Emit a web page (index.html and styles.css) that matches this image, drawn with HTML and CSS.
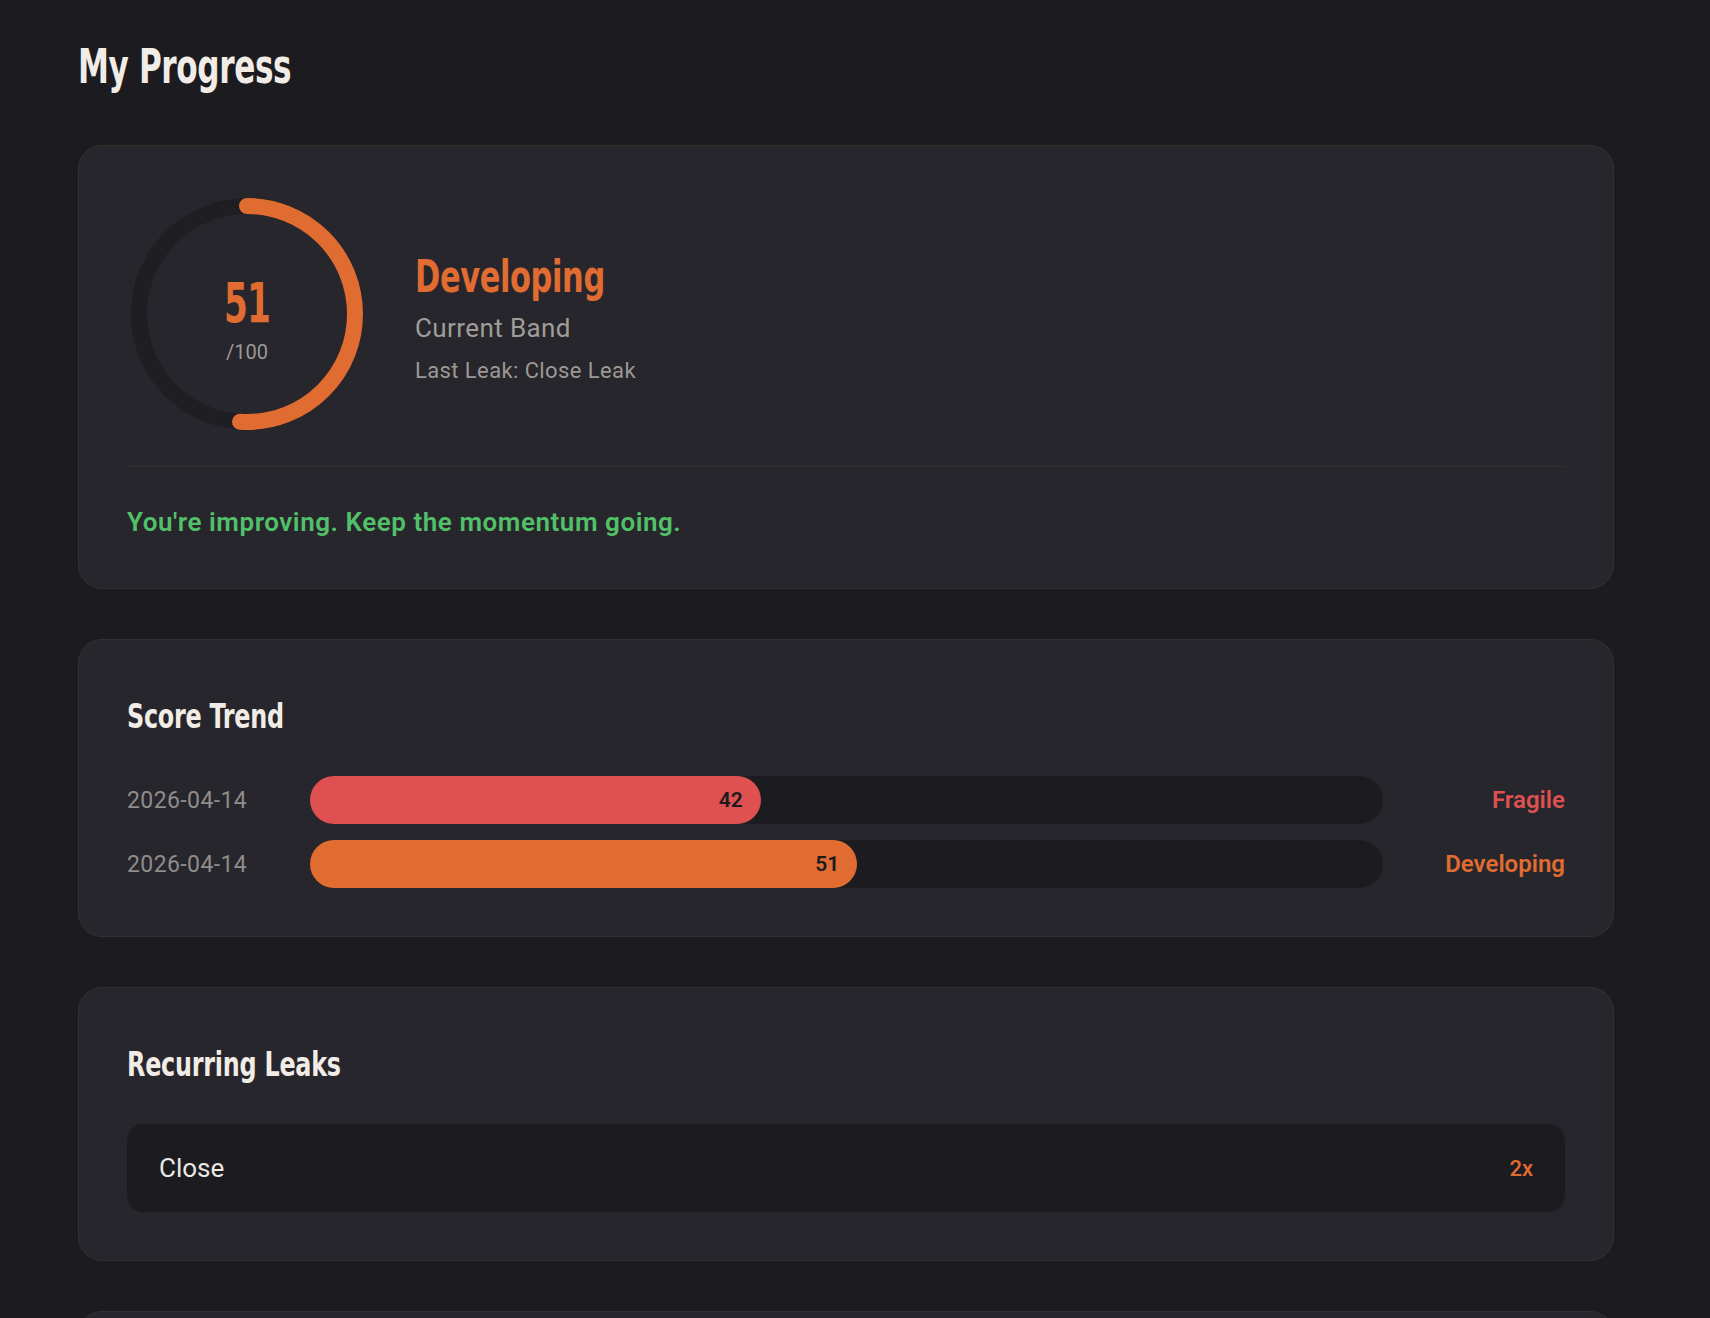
FILE: index.html
```html
<!DOCTYPE html>
<html lang="en">
<head>
  <meta charset="UTF-8" />
  <meta name="viewport" content="width=device-width, initial-scale=1.0" />
  <title>My Progress</title>
  <link rel="stylesheet" href="styles.css">
</head>
<body>
  <main class="page">
    <h1 class="page-title">My Progress</h1>

    <!-- Score summary -->
    <section class="card">
      <div class="score-head">
        <div class="score-ring">
          <svg viewBox="0 0 240 240" width="240" height="240">
            <circle class="ring-track" cx="120" cy="120" r="108" />
            <circle class="ring-fill" cx="120" cy="120" r="108" stroke-dasharray="346.08 678.58" transform="rotate(-90 120 120)" />
          </svg>
          <div class="ring-label">
            <span class="ring-score">51</span>
            <span class="ring-max">/100</span>
          </div>
        </div>
        <div class="score-info">
          <h2 class="band-name">Developing</h2>
          <p class="band-caption">Current Band</p>
          <p class="last-leak">Last Leak: Close Leak</p>
        </div>
      </div>
      <p class="score-note">You're improving. Keep the momentum going.</p>
    </section>

    <!-- Score trend -->
    <section class="card">
      <h2 class="card-title">Score Trend</h2>
      <div class="trend-list">
        <div class="trend-row">
          <span class="trend-date">2026-04-14</span>
          <div class="trend-track">
            <div class="trend-fill fragile" style="width: 42%;">42</div>
          </div>
          <span class="trend-band fragile-text">Fragile</span>
        </div>
        <div class="trend-row">
          <span class="trend-date">2026-04-14</span>
          <div class="trend-track">
            <div class="trend-fill developing" style="width: 51%;">51</div>
          </div>
          <span class="trend-band developing-text">Developing</span>
        </div>
      </div>
    </section>

    <!-- Recurring leaks -->
    <section class="card">
      <h2 class="card-title">Recurring Leaks</h2>
      <div class="leak-item">
        <span class="leak-name">Close</span>
        <span class="leak-count">2x</span>
      </div>
    </section>

    <!-- Session history -->
    <section class="card">
      <h2 class="card-title">Recent Sessions</h2>
    </section>
  </main>
</body>
</html>
```

FILE: styles.css
```css
* {
  box-sizing: border-box;
}
body {
  margin: 0;
  background: #1c1b20;
  color: #ece8e2;
  font-family: 'Roboto', 'Liberation Sans', sans-serif;
}
h1, h2, p {
  margin: 0;
}
.page {
  display: flex;
  flex-direction: column;
  gap: 50px;
  padding: 38px 96px 48px 78px;
}
/* condensed display font, narrowed to match the heading style */
.page-title,
.card-title,
.band-name,
.ring-score {
  font-family: 'Liberation Sans Narrow', 'DejaVu Sans Condensed', sans-serif;
  font-weight: 700;
  transform-origin: left center;
}
.page-title {
  font-size: 48px;
  line-height: 57px;
  letter-spacing: -0.5px;
  color: #f1ede6;
  transform: scaleX(0.72);
}
.card {
  background: #27262c;
  border: 1px solid #37312e;
  border-radius: 24px;
  padding: 48px;
}
.card-title {
  font-size: 34px;
  line-height: 56px;
  letter-spacing: -0.3px;
  color: #f1ede6;
  margin-bottom: 32px;
  transform: scaleX(0.78);
}
/* Score summary */
.score-head {
  display: flex;
  align-items: center;
  gap: 48px;
}
.score-ring {
  display: grid;
  width: 240px;
  height: 240px;
}
.score-ring svg,
.ring-label {
  grid-area: 1 / 1;
}
.ring-track,
.ring-fill {
  fill: none;
  stroke-width: 16;
}
.ring-track {
  stroke: #1f1e23;
}
.ring-fill {
  stroke: #e06c32;
  stroke-linecap: round;
}
.ring-label {
  display: flex;
  flex-direction: column;
  align-items: center;
  justify-content: center;
  padding-top: 10px;
}
.ring-score {
  font-size: 56px;
  line-height: 56px;
  letter-spacing: -1px;
  color: #e06c32;
  transform-origin: center;
  transform: scaleX(0.68);
}
.ring-max {
  margin-top: 9px;
  font-size: 20px;
  line-height: 24px;
  color: #9c9995;
}
.score-info {
  padding-top: 10px;
}
.band-name {
  font-size: 44px;
  line-height: 1.2;
  letter-spacing: -0.5px;
  color: #e06c32;
  transform: scaleX(0.77);
}
.band-caption {
  margin-top: 8px;
  font-size: 26px;
  line-height: 1.3;
  letter-spacing: 0.4px;
  color: #a09d99;
}
.last-leak {
  margin-top: 10px;
  font-size: 22px;
  line-height: 1.4;
  letter-spacing: 0.4px;
  color: #9c9995;
}
.score-note {
  margin-top: 32px;
  padding-top: 37px;
  border-top: 1px solid #35302d;
  font-size: 26px;
  line-height: 1.4;
  font-weight: 600;
  letter-spacing: 0.55px;
  color: #52c069;
}
/* Score trend */
.trend-list {
  display: grid;
  gap: 16px;
}
.trend-row {
  display: grid;
  grid-template-columns: 159px 1fr 158px;
  gap: 24px;
  align-items: center;
  height: 48px;
}
.trend-date {
  font-size: 23px;
  letter-spacing: 0.4px;
  color: #8f8c89;
}
.trend-track {
  height: 48px;
  background: #1c1b20;
  border-radius: 24px;
}
.trend-fill {
  height: 100%;
  border-radius: 24px;
  display: flex;
  align-items: center;
  justify-content: flex-end;
  padding-right: 18px;
  font-size: 21px;
  font-weight: 600;
  color: #1c1b20;
}
.trend-fill.fragile {
  background: #de5150;
}
.trend-fill.developing {
  background: #e06c32;
}
.trend-band {
  text-align: right;
  font-size: 24px;
  font-weight: 600;
}
.fragile-text {
  color: #de5150;
}
.developing-text {
  color: #e06c32;
}
/* Recurring leaks */
.leak-item {
  display: flex;
  align-items: center;
  justify-content: space-between;
  height: 88px;
  padding: 0 32px;
  background: #1c1b20;
  border-radius: 16px;
}
.leak-name {
  font-size: 26px;
  color: #ece8e2;
}
.leak-count {
  font-size: 22px;
  font-weight: 500;
  color: #e06c32;
}
```
